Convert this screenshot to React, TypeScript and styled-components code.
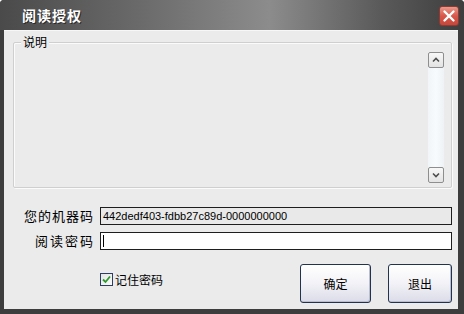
import React from 'react'
import styled, { createGlobalStyle } from 'styled-components'

const GlobalStyle = createGlobalStyle`
  html, body {
    margin: 0;
    padding: 0;
    background: #ffffff;
  }
  body {
    font-family: "Noto Sans CJK SC", "Liberation Sans", sans-serif;
    font-size: 12px;
  }
`

const Window = styled.div`
  width: 464px;
  height: 314px;
  display: flex;
  flex-direction: column;
  background: #3d3d3d;
  border-radius: 4px 4px 0 0;
  box-sizing: border-box;
  overflow: hidden;
`

const TitleBar = styled.div`
  height: 30px;
  flex: none;
  display: flex;
  align-items: center;
  justify-content: space-between;
  padding: 0 5px 0 22px;
  background: linear-gradient(90deg, #4a4a4a 0%, #6a6a6a 30%, #8c8c8c 58%, #5a5a5a 82%, #3e3e3e 100%);
`

const Title = styled.div`
  color: #ffffff;
  font-weight: bold;
  font-size: 14px;
  letter-spacing: 1px;
  text-shadow: 1px 1px 0 #2a2a2a;
`

const CloseButton = styled.div`
  width: 20px;
  height: 20px;
  border-radius: 3px;
  border: 1px solid #8a3b34;
  background: linear-gradient(180deg, #e89a8c 0%, #d8564a 50%, #c5463a 100%);
  display: flex;
  align-items: center;
  justify-content: center;
  box-sizing: border-box;
  margin-top: 1px;
`

const Body = styled.div`
  flex: 1;
  margin: 0 6px 5px 4px;
  background: #ebebeb;
  border-top: 1px solid #f7f7f7;
  padding: 11px 6px 0 9px;
  display: flex;
  flex-direction: column;
`

const GroupBox = styled.div`
  position: relative;
  height: 146px;
  box-sizing: border-box;
  border: 1px solid #cfcfcf;
  box-shadow: inset 1px 1px 0 #fbfbfb, 1px 1px 0 #fbfbfb;
  border-radius: 2px;
  display: flex;
  justify-content: flex-end;
  padding: 9px 7px 4px 0;
`

const Legend = styled.span`
  position: absolute;
  top: -9px;
  left: 7px;
  padding: 0 2px;
  background: #ebebeb;
  color: #000;
  font-size: 12px;
  line-height: 16px;
`

const ScrollBar = styled.div`
  width: 16px;
  display: flex;
  flex-direction: column;
  background: linear-gradient(90deg, #f2f5f7 0%, #f7fbfd 50%, #eef2f4 100%);
`

const ScrollTrack = styled.div`
  flex: 1;
`

const ArrowButton = styled.div`
  width: 16px;
  height: 16px;
  box-sizing: border-box;
  border: 1px solid #8e8e8e;
  border-radius: 2px;
  background: linear-gradient(180deg, #f8f8f8 0%, #e3e3e3 100%);
  display: flex;
  align-items: center;
  justify-content: center;
`

const FieldRow = styled.div<{ $top: number }>`
  display: flex;
  align-items: center;
  margin-top: ${p => p.$top}px;
`

const FieldLabel = styled.div<{ $spacing: number }>`
  width: 87px;
  flex: none;
  text-align: right;
  color: #000;
  font-size: 13px;
  letter-spacing: ${p => p.$spacing}px;
  padding-right: ${p => 7 - p.$spacing}px;
  box-sizing: border-box;
`

const TextField = styled.div<{ $readonly?: boolean }>`
  flex: 1;
  height: 18px;
  box-sizing: border-box;
  border: 1px solid #1e1e1e;
  background: ${p => (p.$readonly ? '#e9e9e9' : '#ffffff')};
  font-family: "Liberation Sans", Arial, sans-serif;
  font-size: 11px;
  line-height: 16px;
  padding-left: 2px;
  color: #000;
  display: flex;
  align-items: center;
`

const Caret = styled.span`
  width: 1px;
  height: 12px;
  background: #000;
`

const Footer = styled.div`
  display: flex;
  align-items: center;
  margin-top: 14px;
  padding-left: 87px;
`

const CheckRow = styled.label`
  display: flex;
  align-items: center;
  gap: 2px;
  margin-top: -9px;
  font-size: 12px;
  color: #000;
`

const CheckBox = styled.span`
  width: 13px;
  height: 13px;
  box-sizing: border-box;
  border: 1px solid #2c3e66;
  background: linear-gradient(135deg, #e2e6e4 0%, #fafafa 100%);
  display: flex;
  align-items: center;
  justify-content: center;
`

const Buttons = styled.div`
  margin-left: auto;
  display: flex;
  gap: 17px;
`

const Button = styled.div<{ $width: number }>`
  width: ${p => p.$width}px;
  height: 39px;
  box-sizing: border-box;
  border: 1px solid #23324d;
  border-radius: 3px;
  background: linear-gradient(180deg, #ffffff 0%, #f4f4f8 45%, #dcdce9 100%);
  box-shadow: inset -1px -1px 0 #b9bfd0;
  display: flex;
  align-items: center;
  justify-content: center;
  font-size: 12px;
  color: #000;
`

const App: React.FC = () => {
  return (
    <>
      <GlobalStyle />
      <Window>
        <TitleBar>
          <Title>阅读授权</Title>
          <CloseButton>
            <svg width="14" height="14" viewBox="0 0 14 14">
              <path d="M2.5 2.5 L11.5 11.5 M11.5 2.5 L2.5 11.5" stroke="#ffffff" strokeWidth="2.4" strokeLinecap="round" />
            </svg>
          </CloseButton>
        </TitleBar>
        <Body>
          <GroupBox>
            <Legend>说明</Legend>
            <ScrollBar>
              <ArrowButton>
                <svg width="8" height="6" viewBox="0 0 8 6">
                  <path d="M1 4.5 L4 1.5 L7 4.5" stroke="#4d4d4d" strokeWidth="1.6" fill="none" />
                </svg>
              </ArrowButton>
              <ScrollTrack />
              <ArrowButton>
                <svg width="8" height="6" viewBox="0 0 8 6">
                  <path d="M1 1.5 L4 4.5 L7 1.5" stroke="#4d4d4d" strokeWidth="1.6" fill="none" />
                </svg>
              </ArrowButton>
            </ScrollBar>
          </GroupBox>
          <FieldRow $top={18}>
            <FieldLabel $spacing={1}>您的机器码</FieldLabel>
            <TextField $readonly>442dedf403-fdbb27c89d-0000000000</TextField>
          </FieldRow>
          <FieldRow $top={6}>
            <FieldLabel $spacing={2}>阅读密码</FieldLabel>
            <TextField>
              <Caret />
            </TextField>
          </FieldRow>
          <Footer>
            <CheckRow>
              <CheckBox>
                <svg width="9" height="9" viewBox="0 0 9 9">
                  <path d="M1 4.5 L3.5 7 L8 1.5" stroke="#2e9a2e" strokeWidth="1.8" fill="none" />
                </svg>
              </CheckBox>
              记住密码
            </CheckRow>
            <Buttons>
              <Button $width={71}>确定</Button>
              <Button $width={64}>退出</Button>
            </Buttons>
          </Footer>
        </Body>
      </Window>
    </>
  )
}

export default App
